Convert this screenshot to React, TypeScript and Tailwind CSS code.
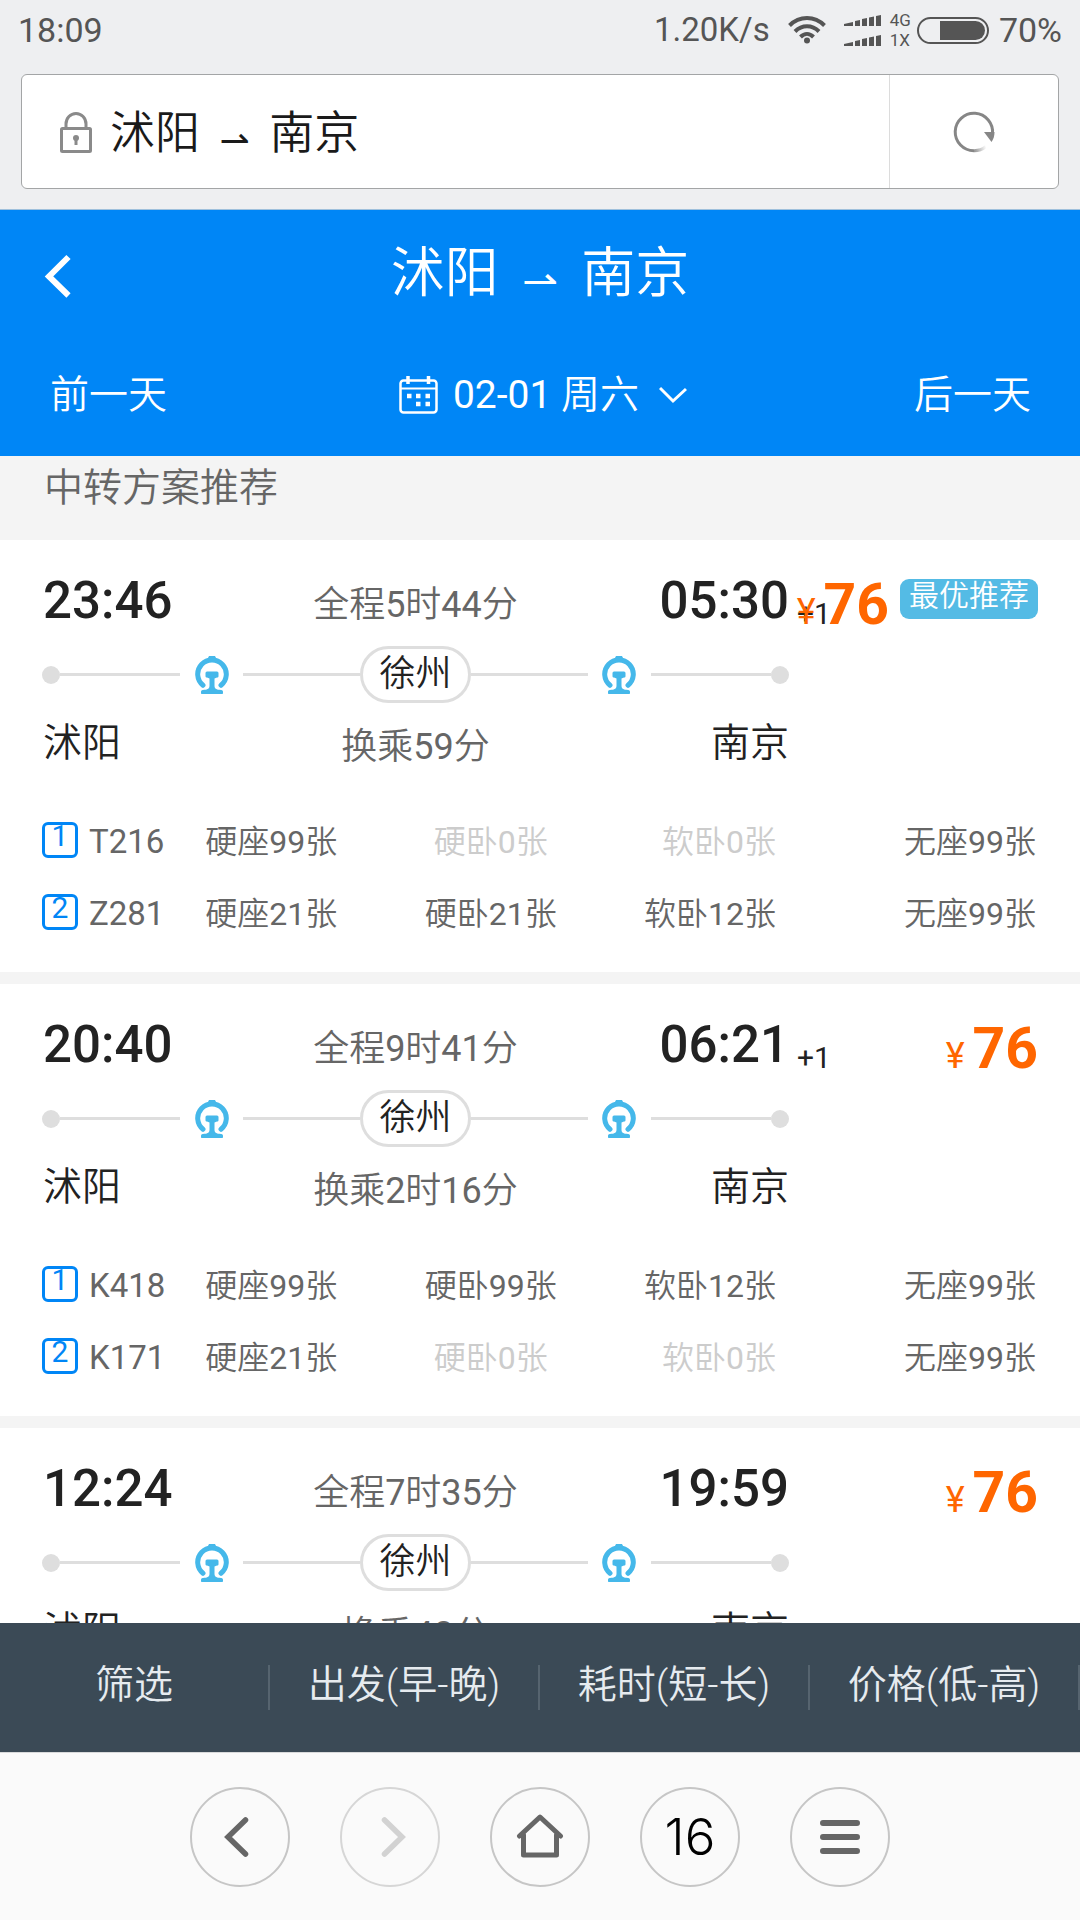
import type { ReactNode } from "react";

type Seat = [kind: string, left: number];
type Leg = { train: string; seats: [Seat, Seat, Seat, Seat] };
type Plan = {
  depart: string;
  arrive: string;
  nextDay: boolean;
  total: string;
  via: string;
  transfer: string;
  price: number;
  best?: boolean;
  legs: Leg[];
};

const FROM = "沭阳";
const TO = "南京";

const seats = (a: number, b: number, c: number, d: number): Leg["seats"] => [
  ["硬座", a],
  ["硬卧", b],
  ["软卧", c],
  ["无座", d],
];

const plans: Plan[] = [
  {
    depart: "23:46", arrive: "05:30", nextDay: true, total: "全程5时44分", via: "徐州", transfer: "换乘59分", price: 76, best: true,
    legs: [
      { train: "T216", seats: seats(99, 0, 0, 99) },
      { train: "Z281", seats: seats(21, 21, 12, 99) },
    ],
  },
  {
    depart: "20:40", arrive: "06:21", nextDay: true, total: "全程9时41分", via: "徐州", transfer: "换乘2时16分", price: 76,
    legs: [
      { train: "K418", seats: seats(99, 99, 12, 99) },
      { train: "K171", seats: seats(21, 0, 0, 99) },
    ],
  },
  {
    depart: "12:24", arrive: "19:59", nextDay: false, total: "全程7时35分", via: "徐州", transfer: "换乘48分", price: 76,
    legs: [],
  },
];

const sortTabs = ["筛选", "出发(早-晚)", "耗时(短-长)", "价格(低-高)"];

function StatusBar() {
  return (
    <div className="flex h-[60px] items-center px-[18px] text-[34px] leading-[60px] text-[#555]">
      <span className="flex-1">18:09</span>
      <span className="text-[33px]">1.20K/s</span>
      <svg className="ml-[18px] h-7 w-[38px]" viewBox="0 0 38 28" fill="none" stroke="currentColor" strokeWidth="4" aria-hidden="true">
        <path d="M1.5 9.5C11.5-.5 26.500-.5 36.500 9.500" />
        <path d="M7 15.500c7-7 17-7 24 0" />
        <path d="M12.500 21c4-4 9-4 13 0" />
        <circle cx="19" cy="24.500" r="3" fill="currentColor" stroke="none" />
      </svg>
      <svg className="ml-[18px] h-8 w-[38px]" viewBox="0 0 38 32" fill="currentColor" aria-hidden="true">
        <path id="bars" d="M0 12v-2l9-2v4zM11 12V7l5-1v6zM18 12V5l5-1v8zM25 12V3.500l5-1V12zM32 12V2l5-1v11z" />
        <use href="#bars" y="20" />
      </svg>
      <span className="ml-2 flex flex-col text-[17px] leading-5">
        <span>4G</span>
        <span>1X</span>
      </span>
      <span className="ml-[6px] flex h-[27px] w-[72px] justify-end rounded-full border-2 border-[#555] p-[2px]">
        <span className="w-[45px] rounded-r-full bg-[#555]" />
      </span>
      <span className="ml-[10px]">70%</span>
    </div>
  );
}

function Route() {
  return (
    <>
      {FROM} <span className="inline-block w-[1.3em] text-center align-[-4px] font-['DejaVu_Sans'] text-[0.8em] leading-none">⇀</span> {TO}
    </>
  );
}

function AddressBar() {
  return (
    <div className="mx-[21px] mt-[14px] mb-5 flex h-[115px] rounded-[6px] border border-[#a3a5a6] bg-white">
      <button type="button" className="flex flex-1 items-center pl-[38px] text-[45px] text-[#1a1a1a]">
        <svg className="mr-[18px] h-[42px] w-8" viewBox="0 0 32 42" fill="none" stroke="#8a8a8a" strokeWidth="3" aria-hidden="true">
          <rect x="1.500" y="17.500" width="29" height="23" rx="1" />
          <path d="M6 17v-4a10 10.500 0 0 1 20 0v4" />
          <circle cx="16" cy="27" r="3" fill="#8a8a8a" stroke="none" />
          <path d="M16 27v7" />
        </svg>
        <span className="pt-[5px]">
          <Route />
        </span>
      </button>
      <button type="button" aria-label="刷新" className="flex w-[169px] items-center justify-center border-l border-[#dcdcdc]">
        <svg className="h-11 w-11" viewBox="0 0 44 44" fill="none" aria-hidden="true">
          <defs>
            <linearGradient id="fade" x1="20" y1="40" x2="34" y2="36" gradientUnits="userSpaceOnUse">
              <stop stopColor="#868686" />
              <stop offset="1" stopColor="#868686" stopOpacity="0" />
            </linearGradient>
          </defs>
          <path d="M40.500 24A18.700 18.700 0 1 0 22 40.700" stroke="#868686" strokeWidth="3" />
          <path d="M22 40.700A18.700 18.700 0 0 0 34 36.500" stroke="url(#fade)" strokeWidth="3" />
          <path d="M32 22h10.500c0 4-1 7-3 10z" fill="#868686" />
        </svg>
      </button>
    </div>
  );
}

function Header() {
  return (
    <header className="border-t border-[#9fc0dc] bg-[#0086f6] text-white">
      <div className="relative flex h-31 items-center justify-center pt-[7px]">
        <button type="button" aria-label="返回" className="absolute left-11 flex h-12 w-8 items-center">
          <svg className="h-11 w-7" viewBox="0 0 28 44" fill="none" stroke="currentColor" strokeWidth="6" aria-hidden="true">
            <path d="M24.500 3L5 22.500 24.500 41.500" />
          </svg>
        </button>
        <h1 className="text-[54px] leading-none font-[350]">
          <Route />
        </h1>
      </div>
      <div className="flex h-[122px] items-center justify-between pr-[49px] pl-[50px] text-[39px]">
        <button type="button" className="font-[350]">前一天</button>
        <button type="button" className="ml-[5px] flex items-center">
          <svg className="mr-[15px] h-[38px] w-[39px]" viewBox="0 0 39 38" fill="none" stroke="currentColor" strokeWidth="2.500" aria-hidden="true">
            <rect x="1.500" y="4.500" width="36" height="32" rx="3" />
            <path d="M2 12.500h35" strokeWidth="2" />
            <path d="M9 0v8M29.500 0v8" strokeWidth="3.500" />
            <path d="M8 20h4.500M17 20h4.500M26.500 20H31M17 28h4.500M26.500 28H31" strokeWidth="4.500" />
          </svg>
          <span>02-01 周六</span>
          <svg className="ml-5 h-[18px] w-[28px]" viewBox="0 0 28 18" fill="none" stroke="currentColor" strokeWidth="3" aria-hidden="true">
            <path d="M1 2l13 13L27 3" />
          </svg>
        </button>
        <button type="button" className="font-[350]">后一天</button>
      </div>
    </header>
  );
}

function TrainIcon() {
  return (
    <svg className="h-[38px] w-[34px]" viewBox="0 0 34 38" fill="none" aria-hidden="true">
      <path d="M8 29.300A14.300 14.300 0 1 1 26 29.300" stroke="#45b8ea" strokeWidth="5" strokeLinecap="round" />
      <path d="M14 0h6l2 4H12z" fill="#45b8ea" />
      <path
        d="M12 15.500h10a1.500 1.500 0 0 1 1.500 1.500v3c0 1-.5 1.500-1.500 1.500l-2.500 1v7c0 3 1.500 4 5 4.300 2.500.2 3.500.7 3.500 2v1.200c0 .6-.4 1-1 1H7c-.6 0-1-.4-1-1v-1.200c0-1.300 1-1.800 3.500-2 3.500-.3 5-1.300 5-4.300v-7l-2.500-1c-1 0-1.500-.5-1.500-1.500v-3a1.500 1.500 0 0 1 1.500-1.500z"
        fill="#45b8ea"
      />
    </svg>
  );
}

const Dot = () => <span className="h-[18px] w-[18px] rounded-full bg-[#dedede]" />;
const Line = () => <span className="h-[3px] flex-1 bg-[#dedede]" />;

function Timeline({ via }: { via: string }) {
  return (
    <div className="flex h-[57px] items-center">
      <span className="flex flex-[46] items-center">
        <Dot />
        <Line />
      </span>
      <span className="flex w-[63px] justify-center">
        <TrainIcon />
      </span>
      <span className="h-[3px] flex-[39] bg-[#dedede]" />
      <span className="h-[57px] rounded-full border-3 border-[#dedede] px-4 text-[36px] leading-[51px] font-[350]">{via}</span>
      <span className="h-[3px] flex-[39] bg-[#dedede]" />
      <span className="flex w-[63px] justify-center">
        <TrainIcon />
      </span>
      <span className="flex flex-[46] items-center">
        <Line />
        <Dot />
      </span>
    </div>
  );
}

function SeatCell({ seat, className }: { seat: Seat; className: string }) {
  const [kind, left] = seat;
  return (
    <td className={`pt-1 text-[32px] ${className} ${left === 0 ? "text-[#ccc]" : ""}`}>
      {kind}
      {left}张
    </td>
  );
}

function Three({ left, mid, right, className }: { left: ReactNode; mid: ReactNode; right: ReactNode; className: string }) {
  return (
    <div className={`relative flex items-center justify-between pl-px ${className}`}>
      {left}
      <span className="absolute inset-x-0 pt-[7px] text-center text-[36px] font-normal text-[#666]">{mid}</span>
      {right}
    </div>
  );
}

function PlanCard({ plan }: { plan: Plan }) {
  return (
    <article className="mb-3 min-h-[432px] bg-white px-[42px] pt-[31px] pb-[23px] text-[#222]">
      <div className="grid grid-cols-[3fr_1fr]">
        <div>
          <Three
            className="h-[60px] text-[51px] font-medium"
            left={<time>{plan.depart}</time>}
            mid={plan.total}
            right={
              <span className="relative">
                <time>{plan.arrive}</time>
                {plan.nextDay && <sup className="absolute top-[31px] left-full ml-2 text-[30px] leading-10 font-normal">+1</sup>}
              </span>
            }
          />
          <div className="pt-[15px]">
            <Timeline via={plan.via} />
          </div>
          <Three
            className="mt-[9px] h-[62px] text-[39px] font-[350]"
            left={<span>{FROM}</span>}
            mid={plan.transfer}
            right={<span>{TO}</span>}
          />
        </div>
        <div className="relative flex h-[66px] items-baseline justify-end leading-[68px] whitespace-nowrap text-[#ff6600]">
          <span className="text-[36px]">¥</span>
          <strong className="ml-2 text-[57px] font-bold">{plan.price}</strong>
          {plan.best && (
            <span className="mt-2 ml-[11px] h-10 self-start rounded-[9px] bg-[#54bbe5] px-[9px] text-[30px] leading-[34px] font-[350] text-white">
              最优推荐
            </span>
          )}
        </div>
      </div>
      {plan.legs.length > 0 && (
        <table className="mt-[30px] w-full table-fixed border-collapse text-[33px] leading-9 text-[#666]">
          <colgroup>
            <col className="w-[16.4%]" />
            <col className="w-[19.1%]" />
            <col className="w-[19.1%]" />
            <col className="w-[19.1%]" />
            <col />
          </colgroup>
          <tbody>
            {plan.legs.map((leg, i) => (
              <tr key={leg.train} className="h-[72px]">
                <th scope="row" className="p-0 text-left font-normal">
                  <span className="flex items-center gap-[11px]">
                    <span className="h-9 w-9 rounded-[6px] border-3 border-[#0086f6] text-center text-[30px] leading-[22px] text-[#0086f6]">
                      {i + 1}
                    </span>
                    <span className="pt-[3px]">{leg.train}</span>
                  </span>
                </th>
                <SeatCell seat={leg.seats[0]} className="text-left" />
                <SeatCell seat={leg.seats[1]} className="text-center" />
                <SeatCell seat={leg.seats[2]} className="text-right" />
                <SeatCell seat={leg.seats[3]} className="pr-[2px] text-right" />
              </tr>
            ))}
          </tbody>
        </table>
      )}
    </article>
  );
}

function NavButton({ label, dim, children }: { label: string; dim?: boolean; children: ReactNode }) {
  return (
    <button
      type="button"
      aria-label={label}
      disabled={dim}
      className={`flex h-[100px] w-[100px] items-center justify-center rounded-full border-2 ${dim ? "border-[#d6d6d6] text-[#d2d2d2]" : "border-[#c6c6c6] text-[#666]"}`}
    >
      {children}
    </button>
  );
}

function BrowserNav() {
  return (
    <nav className="flex h-[168px] items-center justify-center gap-[50px] border-t border-[#d9dadb] bg-[#fafafa]">
      <NavButton label="后退">
        <svg className="mr-[8px] h-11 w-7" viewBox="0 0 28 44" fill="none" stroke="currentColor" strokeWidth="5.500" strokeLinecap="round" aria-hidden="true">
          <path d="M23.500 5L6 22l17.500 17" />
        </svg>
      </NavButton>
      <NavButton label="前进" dim>
        <svg className="ml-[8px] h-11 w-7" viewBox="0 0 28 44" fill="none" stroke="currentColor" strokeWidth="5.500" strokeLinecap="round" aria-hidden="true">
          <path d="M4.500 5L22 22 4.500 39" />
        </svg>
      </NavButton>
      <NavButton label="主页">
        <svg className="h-12 w-12" viewBox="0 0 48 48" fill="none" stroke="currentColor" strokeWidth="5" strokeLinecap="round" strokeLinejoin="round" aria-hidden="true">
          <path d="M3.500 23L24 4l20.500 19" />
          <path d="M7.500 22v20h33V22" />
        </svg>
      </NavButton>
      <NavButton label="16 个标签页">
        <span className="font-['Inter'] text-[51px] leading-none font-[350] text-black">16</span>
      </NavButton>
      <NavButton label="菜单">
        <svg className="h-10 w-10" viewBox="0 0 40 40" stroke="currentColor" strokeWidth="6" strokeLinecap="round" aria-hidden="true">
          <path d="M3 6h34M3 20h34M3 34h34" />
        </svg>
      </NavButton>
    </nav>
  );
}

export default function App() {
  return (
    <div lang="zh-CN" className="flex h-screen flex-col bg-[#eeeff1] font-['Roboto','Noto_Sans_CJK_SC_DemiLight','Noto_Sans_CJK_SC',sans-serif]">
      <StatusBar />
      <AddressBar />
      <Header />
      <main className="min-h-0 flex-1 overflow-y-auto bg-[#f4f4f4] [scrollbar-width:none]">
        <h2 className="px-[44px] pt-[2px] pb-[22px] text-[39px] leading-[60px] font-[350] text-[#666]">中转方案推荐</h2>
        {plans.map((plan) => (
          <PlanCard key={plan.depart} plan={plan} />
        ))}
      </main>
      <div className="flex h-[129px] items-center bg-[#3b4a56] text-[39px] text-[#e6ebef]">
        {sortTabs.map((tab) => (
          <button key={tab} type="button" className="h-[45px] flex-1 border-r-2 border-[#56646f] pb-[5px] leading-10 font-[350] whitespace-nowrap">
            {tab}
          </button>
        ))}
      </div>
      <BrowserNav />
    </div>
  );
}
